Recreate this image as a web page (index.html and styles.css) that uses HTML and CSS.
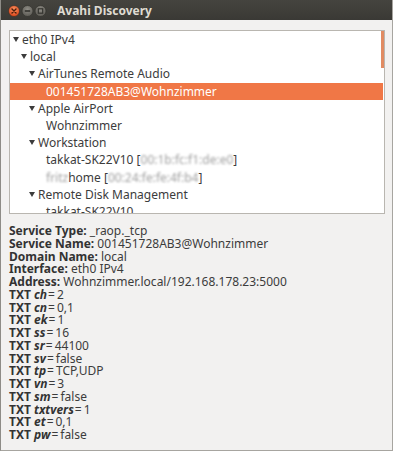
FILE: index.html
```html
<!DOCTYPE html>
<html lang="en">
<head>
    <meta charset="UTF-8">
    <meta name="viewport" content="width=device-width, initial-scale=1.0">
    <title>Avahi Discovery</title>
    <link rel="stylesheet" href="styles.css">
</head>
<body>
    <div class="window">
        <!-- title bar -->
        <div class="titlebar">
            <div class="buttons">
                <svg width="42" height="14" viewBox="0 0 42 14">
                    <defs>
                        <radialGradient id="closeGrad" cx="50%" cy="35%" r="60%">
                            <stop offset="0" stop-color="#f8915f"/>
                            <stop offset="1" stop-color="#df4a1e"/>
                        </radialGradient>
                        <radialGradient id="greyGrad" cx="50%" cy="35%" r="60%">
                            <stop offset="0" stop-color="#8f8d86"/>
                            <stop offset="1" stop-color="#5f5d57"/>
                        </radialGradient>
                    </defs>
                    <circle cx="6" cy="7" r="5.5" fill="url(#closeGrad)" stroke="#2e2d29" stroke-width="0.6"/>
                    <path d="M4 5 L8 9 M8 5 L4 9" stroke="#4a1d0c" stroke-width="1.4" stroke-linecap="round"/>
                    <circle cx="19.5" cy="7" r="5.5" fill="url(#greyGrad)" stroke="#2e2d29" stroke-width="0.6"/>
                    <path d="M16.8 7 H22.2" stroke="#34332f" stroke-width="1.6"/>
                    <circle cx="32.5" cy="7" r="5.5" fill="url(#greyGrad)" stroke="#2e2d29" stroke-width="0.6"/>
                    <rect x="30.3" y="4.8" width="4.4" height="4.4" fill="none" stroke="#34332f" stroke-width="1.2"/>
                </svg>
            </div>
            <div class="title">Avahi Discovery</div>
        </div>

        <div class="content">
            <!-- service tree -->
            <div class="tree">
                <div class="row"><span class="indent l0"></span><span class="expander open"></span><span>eth0 IPv4</span></div>
                <div class="row"><span class="indent l1"></span><span class="expander open"></span><span>local</span></div>
                <div class="row"><span class="indent l2"></span><span class="expander open"></span><span>AirTunes Remote Audio</span></div>
                <div class="row selected"><span class="indent l3"></span><span class="expander"></span><span>001451728AB3@Wohnzimmer</span></div>
                <div class="row"><span class="indent l2"></span><span class="expander open"></span><span>Apple AirPort</span></div>
                <div class="row"><span class="indent l3"></span><span class="expander"></span><span>Wohnzimmer</span></div>
                <div class="row"><span class="indent l2"></span><span class="expander open"></span><span>Workstation</span></div>
                <div class="row"><span class="indent l3"></span><span class="expander"></span><span>takkat-SK22V10 [<span class="blur">00:1b:fc:f1:de:e0</span>]</span></div>
                <div class="row"><span class="indent l3"></span><span class="expander"></span><span><span class="blur">fritz</span>home [<span class="blur">00:24:fe:fe:4f:b4</span>]</span></div>
                <div class="row"><span class="indent l2"></span><span class="expander open"></span><span>Remote Disk Management</span></div>
                <div class="row"><span class="indent l3"></span><span class="expander"></span><span>takkat-SK22V10</span></div>
                <div class="scrollbar"></div>
            </div>

            <!-- service details -->
            <div class="details">
                <div><b>Service Type:</b> _raop._tcp</div>
                <div><b>Service Name:</b> 001451728AB3@Wohnzimmer</div>
                <div><b>Domain Name:</b> local</div>
                <div><b>Interface:</b> eth0 IPv4</div>
                <div><b>Address:</b> Wohnzimmer.local/192.168.178.23:5000</div>
                <div><b>TXT <i>ch</i></b><span class="eq">=</span>2</div>
                <div><b>TXT <i>cn</i></b><span class="eq">=</span>0,1</div>
                <div><b>TXT <i>ek</i></b><span class="eq">=</span>1</div>
                <div><b>TXT <i>ss</i></b><span class="eq">=</span>16</div>
                <div><b>TXT <i>sr</i></b><span class="eq">=</span>44100</div>
                <div><b>TXT <i>sv</i></b><span class="eq">=</span>false</div>
                <div><b>TXT <i>tp</i></b><span class="eq">=</span>TCP,UDP</div>
                <div><b>TXT <i>vn</i></b><span class="eq">=</span>3</div>
                <div><b>TXT <i>sm</i></b><span class="eq">=</span>false</div>
                <div><b>TXT <i>txtvers</i></b><span class="eq">=</span>1</div>
                <div><b>TXT <i>et</i></b><span class="eq">=</span>0,1</div>
                <div><b>TXT <i>pw</i></b><span class="eq">=</span>false</div>
            </div>
        </div>
    </div>
</body>
</html>
```

FILE: styles.css
```css
body {
    margin: 0;
    padding: 0;
    background-color: #f2f1f0;
    font-family: "Noto Sans", "DejaVu Sans", sans-serif;
    color: #3c3c3c;
}
.window {
    width: 393px;
    height: 451px;
    box-sizing: border-box;
    display: flex;
    flex-direction: column;
    background-color: #f2f1f0;
    border-left: 1px solid #8e8c87;
    border-right: 1px solid #a7a5a0;
    border-bottom: 1px solid #a7a5a0;
    overflow: hidden;
}
.titlebar {
    height: 20px;
    flex: none;
    display: flex;
    align-items: center;
    background: linear-gradient(#45443f, #3a3935);
}
.buttons {
    display: flex;
    margin-left: 7px;
    margin-top: 1px;
}
.title {
    margin-left: 7px;
    color: #dfdbd2;
    font-weight: bold;
    font-size: 12px;
}
.content {
    flex: 1;
    padding: 10px 7px 0 8px;
    display: flex;
    flex-direction: column;
}
.tree {
    position: relative;
    height: 182px;
    flex: none;
    background-color: #fff;
    border: 1px solid #b9b6b0;
    overflow: hidden;
    font-size: 12px;
}
.row {
    height: 17.2px;
    display: flex;
    align-items: center;
    white-space: nowrap;
    margin-right: 1px;
}
.row.selected {
    background-color: #f07746;
    color: #fff;
}
.indent {
    flex: none;
}
.l1 { width: 8px; }
.l2 { width: 16px; }
.l3 { width: 24px; }
.expander {
    flex: none;
    width: 12px;
    height: 17px;
    position: relative;
}
.expander.open::before {
    content: "";
    position: absolute;
    left: 3px;
    top: 6px;
    border-left: 3px solid transparent;
    border-right: 3px solid transparent;
    border-top: 5px solid #3c3c3c;
}
.blur {
    color: #a0a0a0;
    filter: blur(1.3px);
}
.scrollbar {
    position: absolute;
    top: 0;
    right: 0;
    width: 3px;
    height: 37px;
    background-color: #e18b62;
}
.details {
    margin-top: 11px;
    font-size: 12px;
    line-height: 12.75px;
    white-space: nowrap;
}
.details b {
    font-weight: bold;
    color: #333;
}
.details .eq {
    margin: 0 2px 0 1px;
}
```
